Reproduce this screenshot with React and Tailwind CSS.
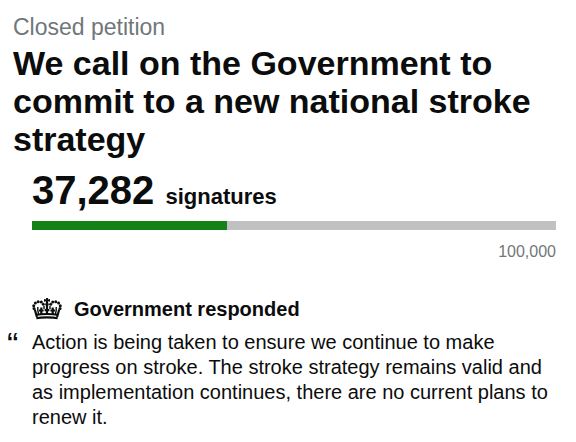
const signatures = 37282;
const threshold = 100000;

function Crown() {
  return (
    <svg viewBox="0 0 30 22" className="h-[22px] w-[30px] shrink-0" fill="#0b0c0c" aria-hidden="true">
      <path d="M14 0h2.200l-.3 1.500 2.100-.4v2.600l-2.100-.4.3 2h-2.400l.3-2-2.100.4V1.100l2.100.4z" />
      <g>
        <circle cx="15" cy="6.300" r="1.700" />
        <circle cx="11.300" cy="6.200" r="1.500" />
        <circle cx="18.700" cy="6.200" r="1.500" />
        <circle cx="9.300" cy="4" r="1.500" />
        <circle cx="20.700" cy="4" r="1.500" />
        <circle cx="6.200" cy="3.700" r="1.500" />
        <circle cx="23.800" cy="3.700" r="1.500" />
        <circle cx="3.400" cy="5" r="1.500" />
        <circle cx="26.600" cy="5" r="1.500" />
        <circle cx="1.700" cy="7.700" r="1.500" />
        <circle cx="28.300" cy="7.700" r="1.500" />
        <circle cx="2" cy="10.600" r="1.500" />
        <circle cx="28" cy="10.600" r="1.500" />
      </g>
      <g fill="none" stroke="#0b0c0c">
        <path strokeWidth="2.200" d="M2.800 11.500 4.900 19M27.200 11.500 25.100 19" />
        <path strokeWidth="2" d="M4.800 16.800c5-1.200 15.400-1.200 20.400 0" />
        <path strokeWidth="2.200" d="M4.300 20.200c5-1.200 16.400-1.200 21.400 0" />
        <path strokeWidth="2.200" d="M15 7v9M12.600 12.200h4.800M9.300 9.500v7M7 12.500h4.600M20.700 9.500v7M18.400 12.500H23" />
        <path strokeWidth="1.400" d="M5.800 9v3.500l.8 3.500M24.200 9v3.500l-.8 3.500M12 8v3M18 8v3" />
      </g>
    </svg>
  );
}

export default function App() {
  return (
    <main className="bg-white pt-[14px] pr-5 pl-[13px] font-['Liberation_Sans',Arial,sans-serif] text-[#0b0c0c]">
      <h1 className="text-[34px] leading-[38px] font-bold">
        <span className="block text-[23px] leading-[27px] font-normal text-[#6f777b]">Closed petition</span>
        <span className="block pt-[3px]">We call on the Government to commit to a new national stroke strategy</span>
      </h1>

      <section className="pt-2 pl-[19px]">
        <p className="text-[40px] leading-[48px] font-bold">
          {signatures.toLocaleString("en-GB")} <span className="text-[22px]">signatures</span>
        </p>
        <div
          className="h-[9px] bg-[#bfc1c3]"
          role="progressbar"
          aria-label="Signatures"
          aria-valuemin={0}
          aria-valuemax={threshold}
          aria-valuenow={signatures}
        >
          <div className="h-full bg-[#158215]" style={{ width: `${(signatures / threshold) * 100}%` }} />
        </div>
        <p className="pt-3 text-right text-[16px] leading-5 text-[#6f777b]">{threshold.toLocaleString("en-GB")}</p>
      </section>

      <section className="pt-8 pl-[19px]">
        <h2 className="flex items-center gap-3 text-[20px] leading-[30px] font-bold">
          <Crown />
          Government responded
        </h2>
        <blockquote className="relative pt-[6px] text-[20px] leading-[25px]">
          <span className="absolute top-1 -left-[25px] text-[34px] leading-8" aria-hidden="true">“</span>
          Action is being taken to ensure we continue to make progress on stroke. The stroke strategy remains valid
          and as implementation continues, there are no current plans to renew it.
        </blockquote>
      </section>
    </main>
  );
}
